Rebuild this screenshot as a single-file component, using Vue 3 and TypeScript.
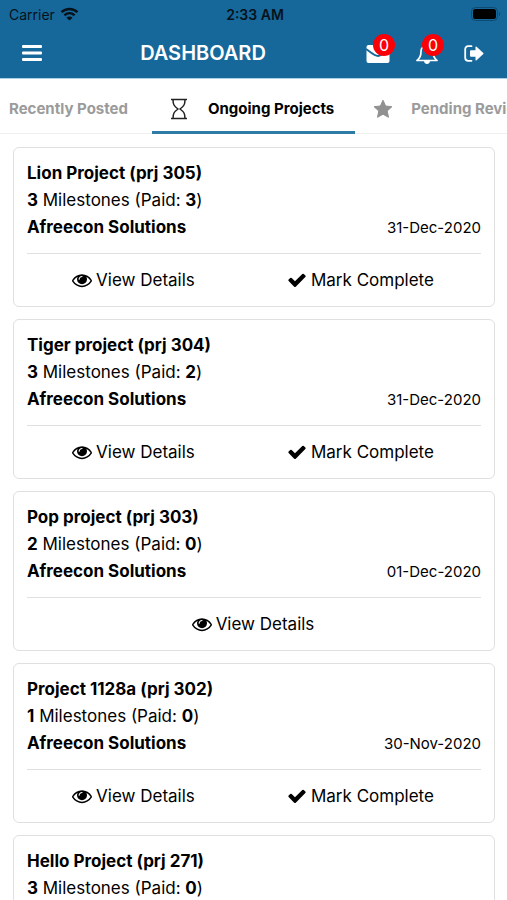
<script setup lang="ts">
interface Project {
  id: number
  name: string
  milestones: number
  paid: number
  client: string
  date: string
  canComplete: boolean
}

const projects: Project[] = [
  { id: 305, name: 'Lion Project', milestones: 3, paid: 3, client: 'Afreecon Solutions', date: '31-Dec-2020', canComplete: true },
  { id: 304, name: 'Tiger project', milestones: 3, paid: 2, client: 'Afreecon Solutions', date: '31-Dec-2020', canComplete: true },
  { id: 303, name: 'Pop project', milestones: 2, paid: 0, client: 'Afreecon Solutions', date: '01-Dec-2020', canComplete: false },
  { id: 302, name: 'Project 1128a', milestones: 1, paid: 0, client: 'Afreecon Solutions', date: '30-Nov-2020', canComplete: true },
  { id: 271, name: 'Hello Project', milestones: 3, paid: 0, client: 'Afreecon Solutions', date: '30-Nov-2020', canComplete: true },
]
</script>

<template>
  <div class="screen">
    <header class="top">
      <div class="status">
        <div class="carrier">
          <span>Carrier</span>
          <svg width="19" height="14" viewBox="0 0 18 14" aria-hidden="true">
            <path d="M1 5.200C5.600.8 12.400.8 17 5.200M3.900 8.400c3-2.800 7.200-2.800 10.200 0" fill="none" stroke="#06121b" stroke-width="2.500" />
            <path d="M9 13.600 5.900 10.700c1.800-1.500 4.400-1.500 6.200 0z" fill="#06121b" />
          </svg>
        </div>
        <span class="clock">2:33 AM</span>
        <svg class="battery" width="30" height="14" viewBox="0 0 30 14" aria-hidden="true">
          <rect x=".5" y=".5" width="26" height="13" rx="4" fill="none" stroke="#0f4a70" />
          <rect x="2" y="2" width="23" height="10" rx="2.500" fill="#000" />
          <path d="M28 5v4c1.600-.6 1.600-3.400 0-4z" fill="#0f4a70" />
        </svg>
      </div>
      <div class="bar">
        <button class="icon-btn menu" type="button" aria-label="Menu">
          <svg width="20" height="16" viewBox="0 0 20 16" fill="#fff">
            <rect width="20" height="3" rx="1" /><rect y="6.500" width="20" height="3" rx="1" /><rect y="13" width="20" height="3" rx="1" />
          </svg>
        </button>
        <h1>DASHBOARD</h1>
        <div class="actions">
          <button class="icon-btn" type="button" aria-label="Messages">
            <svg width="24" height="22" viewBox="0 0 24 22">
              <rect x=".5" y="3" width="23" height="18" rx="2" fill="#fff" />
              <path d="M0 7c4 2.600 8 7 12 7s8-4.400 12-7" fill="none" stroke="#17689a" stroke-width="1.800" />
            </svg>
            <span class="badge">0</span>
          </button>
          <button class="icon-btn" type="button" aria-label="Notifications">
            <svg width="24" height="22" viewBox="0 0 24 22">
              <path d="M2 18.500c3-2.200 4-4.700 4-9C6 6 8.500 4 12 4s6 2 6 5.500c0 4.300 1 6.800 4 9z" fill="none" stroke="#fff" stroke-width="1.700" stroke-linejoin="round" />
              <path d="M9 19h6c-.2 2-1.400 3-3 3s-2.800-1-3-3z" fill="#fff" />
            </svg>
            <span class="badge">0</span>
          </button>
          <button class="icon-btn" type="button" aria-label="Log out">
            <svg width="20" height="17" viewBox="0 0 20 17">
              <path d="M7.500 1.200H4.200C2.300 1.200 1.200 2.400 1.200 4.200v8.600c0 1.800 1.100 3 3 3h3.300" fill="none" stroke="#fff" stroke-width="1.800" stroke-linecap="round" />
              <path d="M6 6.200q0-1 1-1h4.500V2.300q0-1.500 1.100-.5l6.700 6.100q.6.600 0 1.200l-6.700 6.100q-1.100 1-1.100-.5v-2.900H7q-1 0-1-1z" fill="#fff" />
            </svg>
          </button>
        </div>
      </div>
    </header>

    <nav class="tabs" aria-label="Project lists">
      <button class="tab first" type="button">Recently Posted</button>
      <button class="tab active" type="button">
        <svg width="20" height="22" viewBox="0 0 20 22" fill="none" stroke="#222" stroke-width="1.500" aria-hidden="true">
          <path d="M1 1.500h16M1 20.500h16M3 1.500c0 5 1 6.500 5 9.500-4 3-5 4.500-5 9.500M15 1.500c0 5-1 6.500-5 9.500 4 3 5 4.500 5 9.500" />
        </svg>
        Ongoing Projects
      </button>
      <button class="tab" type="button">
        <svg width="20" height="20" viewBox="0 0 20 20" fill="#919191" aria-hidden="true">
          <path d="M10 1.200 12.600 7l6.300.7-4.700 4.300 1.300 6.300L10 15.200l-5.500 3.100L5.800 12 1.100 7.700 7.400 7z" stroke="#919191" stroke-linejoin="round" />
        </svg>
        Pending Review
      </button>
    </nav>

    <main class="list">
      <article v-for="p in projects" :key="p.id" class="card">
        <h2>{{ p.name }} (prj {{ p.id }})</h2>
        <p><b>{{ p.milestones }}</b> Milestones (Paid: <b>{{ p.paid }}</b>)</p>
        <div class="client">
          <b>{{ p.client }}</b>
          <time>{{ p.date }}</time>
        </div>
        <div class="card-actions">
          <button type="button">
            <svg width="20" height="20" viewBox="0 0 1792 1792" aria-hidden="true">
              <path d="M1664 960q-152-236-381-353 61 104 61 225 0 185-131.500 316.500t-316.500 131.500-316.500-131.500-131.500-316.500q0-121 61-225-229 117-381 353 133 205 333.500 326.500t434.500 121.500 434.500-121.500 333.500-326.500zm-720-384q0-20-14-34t-34-14q-125 0-214.500 89.500t-89.500 214.500q0 20 14 34t34 14 34-14 14-34q0-86 61-147t147-61q20 0 34-14t14-34zm848 384q0 34-20 69-140 230-376.500 368.500t-499.500 138.500-499.500-139-376.500-368q-20-35-20-69t20-69q140-229 376.500-368t499.500-139 499.500 139 376.500 368q20 35 20 69z" />
            </svg>
            View Details
          </button>
          <button v-if="p.canComplete" type="button">
            <svg width="20" height="20" viewBox="0 0 1792 1792" aria-hidden="true">
              <path d="M1671 566q0 40-28 68l-724 724-136 136q-28 28-68 28t-68-28l-136-136-362-362q-28-28-28-68t28-68l136-136q28-28 68-28t68 28l294 295 656-657q28-28 68-28t68 28l136 136q28 28 28 68z" />
            </svg>
            Mark Complete
          </button>
        </div>
      </article>
    </main>
  </div>
</template>

<style>
body {
  margin: 0;
  background: #fff;
}
</style>

<style scoped>
.screen {
  display: flex;
  flex-direction: column;
  height: 100vh;
  overflow: hidden;
  font-family: Inter, "Liberation Sans", sans-serif;
  color: #000;
}

button {
  padding: 0;
  border: 0;
  background: none;
  font: inherit;
  color: inherit;
  cursor: pointer;
}

svg {
  display: block;
  flex: none;
}

.top {
  flex: none;
  background: #17689a;
  border-bottom: 1px solid #a9cfe6;
}

.status {
  display: grid;
  grid-template-columns: 1fr auto 1fr;
  align-items: center;
  height: 28px;
  padding: 0 6px 0 9px;
  font-size: 14px;
  color: #06121b;
}

.carrier {
  display: flex;
  align-items: center;
  gap: 5px;
}

.clock {
  font-weight: 600;
}

.battery {
  justify-self: end;
}

.bar {
  display: grid;
  grid-template-columns: 20px 1fr 120px;
  align-items: center;
  height: 50px;
  padding: 0 23px 0 22px;
}

.menu {
  justify-self: start;
}

h1 {
  margin: 0;
  font-size: 20px;
  font-weight: 600;
  line-height: 24px;
  color: #fff;
  justify-self: center;
}

.actions {
  display: flex;
  align-items: center;
  justify-content: flex-end;
  gap: 25px;
}

.icon-btn {
  position: relative;
}

.badge {
  position: absolute;
  top: -8px;
  left: 7px;
  width: 22px;
  height: 22px;
  border-radius: 50%;
  background: #fb0007;
  color: #fff;
  font-size: 16px;
  line-height: 22px;
  text-align: center;
}

.tabs {
  flex: none;
  display: flex;
  height: 55px;
  overflow: hidden;
  box-shadow: inset 0 -1px #efefef;
}

.tab {
  flex: none;
  display: flex;
  align-items: center;
  gap: 18px;
  padding: 7px 21px 0 18px;
  border-bottom: 3px solid transparent;
  font-size: 15px;
  font-weight: 700;
  color: #9b9b9b;
}

.first {
  padding-left: 9px;
  padding-right: 24px;
}

.active {
  color: #000;
  border-bottom-color: #2e7ba6;
}

.list {
  flex: 1;
  min-height: 0;
  display: flex;
  flex-direction: column;
  gap: 12px;
  padding: 13px 12px 0 13px;
  overflow: hidden;
}

.card {
  flex: none;
  padding: 12px 13px 0;
  border: 1px solid #e0e0e0;
  border-radius: 6px;
  font-size: 17px;
  line-height: 27px;
}

h2,
p {
  margin: 0;
  font-size: inherit;
}

h2,
b {
  font-weight: 700;
}

.client {
  display: flex;
  justify-content: space-between;
  padding-bottom: 12px;
  border-bottom: 1px solid #e0e0e0;
}

time {
  font-size: 15px;
}

.card-actions {
  display: flex;
  justify-content: space-around;
  height: 52px;
}

.card-actions button {
  display: flex;
  align-items: center;
  gap: 4px;
  padding-right: 2px;
}
</style>
